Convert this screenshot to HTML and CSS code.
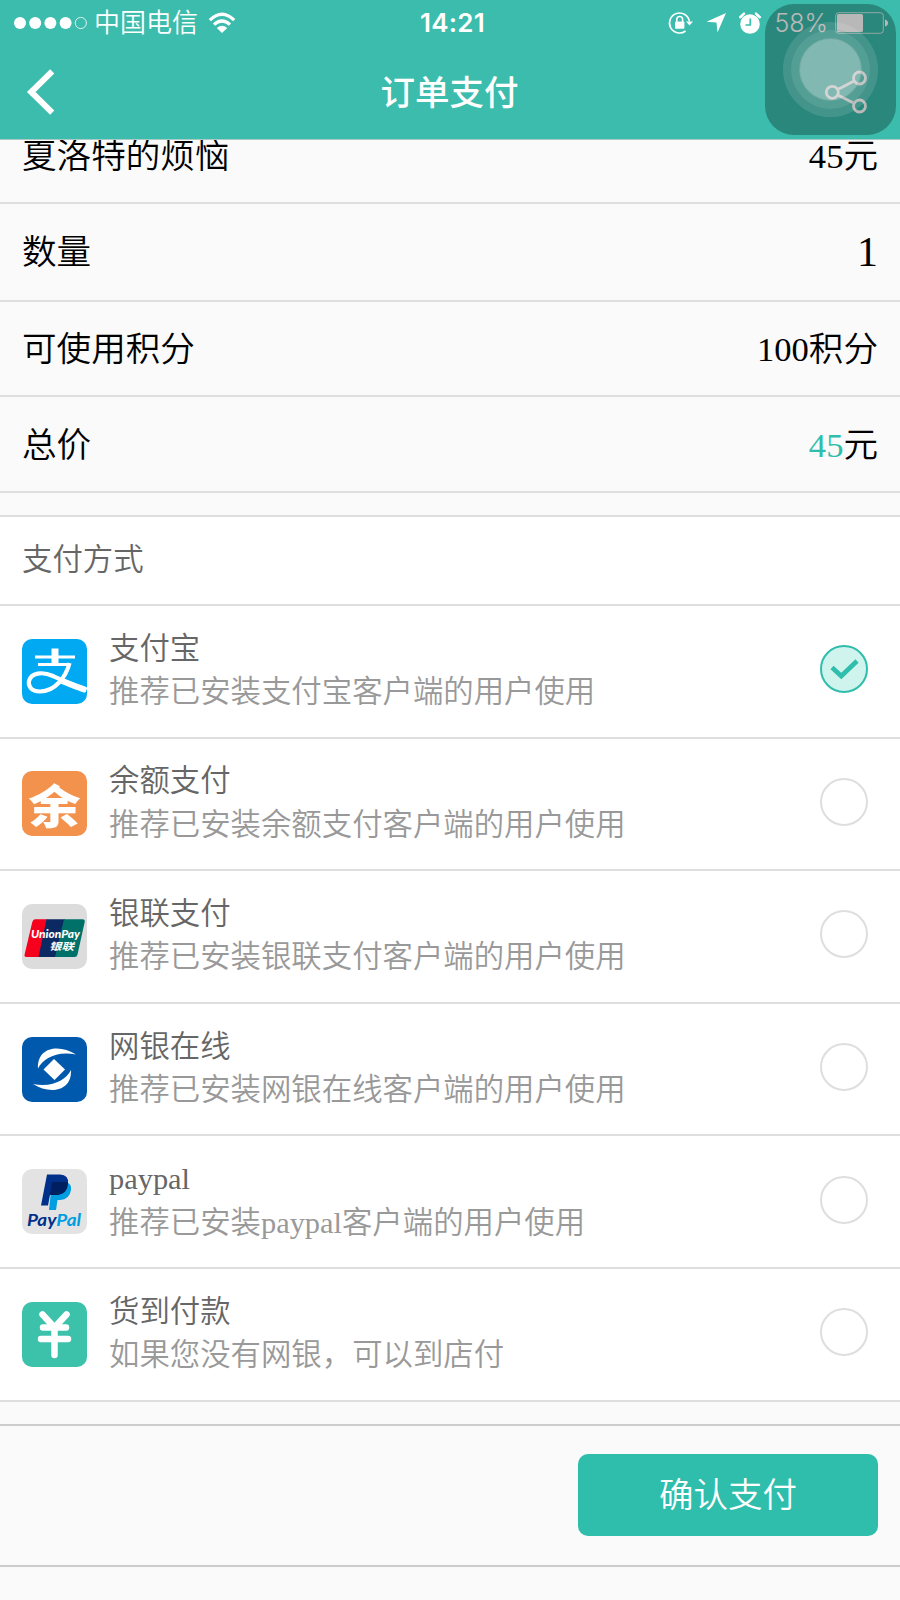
FILE: index.html
```
<!DOCTYPE html>
<html lang="zh-CN">
<head>
  <meta charset="UTF-8" />
  <meta name="viewport" content="width=device-width, initial-scale=1" />
  <title>订单支付</title>
  <link rel="stylesheet" href="styles.css">
</head>
<body>
  <header class="header">
    <div class="status-bar">
      <div class="status-left">
        <svg class="signal" width="75" height="14" viewBox="0 0 75 14">
          <g fill="#fff"><circle cx="7" cy="7" r="6"/><circle cx="22.2" cy="7" r="6"/><circle cx="37.4" cy="7" r="6"/><circle cx="52.6" cy="7" r="6"/></g>
          <circle cx="67.8" cy="7" r="5.6" fill="none" stroke="#fff" stroke-width="0.8"/>
        </svg>
        <span class="carrier">中国电信</span>
        <svg class="wifi" width="28" height="22" viewBox="0 0 28 22">
          <g fill="none" stroke="#fff" stroke-width="3.2">
            <path d="M1.8 8.2Q14-3.8 26.2 8.2"/>
            <path d="M6 12.6Q14 5.4 22 12.6"/>
          </g>
          <path d="M8.8 16Q14 11.4 19.2 16L14 21Z" fill="#fff"/>
        </svg>
      </div>
      <div class="time">14:21</div>
      <div class="status-right">
        <svg width="26" height="24" viewBox="0 0 26 24">
          <path d="M21.4 10.5A10 10 0 1 0 17.5 20" fill="none" stroke="#fff" stroke-width="1.6"/>
          <path d="M18 10.5H25L21.5 14.5Z" fill="#fff"/>
          <rect x="7" y="10.5" width="9.4" height="7.2" rx="1" fill="#fff"/>
          <path d="M8.8 11V8.5a2.9 2.9 0 0 1 5.8 0V11" fill="none" stroke="#fff" stroke-width="1.5"/>
        </svg>
        <svg class="location" width="20" height="20" viewBox="0 0 20 20">
          <path d="M20 0L11.5 19.5L10.5 9.5L0.5 8.8Z" fill="#fff"/>
        </svg>
        <svg class="alarm" width="22" height="22" viewBox="0 0 22 22">
          <circle cx="11" cy="12" r="9.8" fill="#fff"/>
          <path d="M1.2 5.2L5 1.6M20.8 5.2L17 1.6" stroke="#fff" stroke-width="2.6" stroke-linecap="round"/>
          <path d="M11.3 6.5V13H6.5" fill="none" stroke="#3bbcac" stroke-width="1.7"/>
        </svg>
        <span class="percent">58%</span>
        <svg class="battery" width="54" height="22" viewBox="0 0 54 22">
          <rect x="0.7" y="0.7" width="47.6" height="20.6" rx="3" fill="none" stroke="#fff" stroke-width="1" opacity=".7"/>
          <rect x="2" y="2" width="26" height="18" rx="1.5" fill="#fff"/>
          <path d="M50 7.5Q53 8.5 53 11T50 14.5Z" fill="#fff"/>
        </svg>
      </div>
    </div>
    <div class="nav-bar">
      <svg class="back" width="28" height="46" viewBox="0 0 28 46">
        <path d="M25.2 2.3L4.2 23L25.2 43.7" fill="none" stroke="#fff" stroke-width="6"/>
      </svg>
      <h1 class="title">订单支付</h1>
      <svg class="share" width="42" height="44" viewBox="0 0 42 44">
        <g fill="none" stroke="#fff" stroke-width="2.8">
          <circle cx="7.3" cy="22.3" r="6"/><circle cx="34.5" cy="8" r="6"/><circle cx="34.5" cy="36" r="6"/>
          <path d="M12.8 19.5L29 11M12.8 25L29 33.2"/>
        </g>
      </svg>
    </div>
    <!-- floating touch button -->
    <div class="assistive">
      <div class="ring ring-outer"></div>
      <div class="ring ring-middle"></div>
      <div class="ring ring-inner"></div>
    </div>
  </header>

  <section class="summary">
    <div class="summary-row"><span>夏洛特的烦恼</span><span>45元</span></div>
    <div class="summary-row tall"><span>数量</span><span class="count">1</span></div>
    <div class="summary-row"><span>可使用积分</span><span>100积分</span></div>
    <div class="summary-row"><span>总价</span><span><em class="price">45</em>元</span></div>
  </section>

  <section class="payment">
    <h2 class="payment-title">支付方式</h2>

    <div class="method">
      <svg class="logo" viewBox="0 0 65 65">
        <rect width="65" height="65" rx="10" fill="#00a9f2"/>
        <g fill="none" stroke="#fff">
          <path d="M33 9.5V26" stroke-width="7"/>
          <path d="M13 18H53M16 25.6H47" stroke-width="3"/>
          <path d="M47.5 24.1C44 38 33 52.5 18 52.5C9 52.5 6 47 7 42C9 34 20 32 31 37C41 41.5 52 46.5 64.500 51" stroke-width="4.2"/>
          <path d="M40 42C48 45 56 48.500 64 51" stroke-width="6"/>
        </g>
      </svg>
      <div class="info"><h3>支付宝</h3><p>推荐已安装支付宝客户端的用户使用</p></div>
      <svg class="check" viewBox="0 0 48 48">
        <circle cx="24" cy="24" r="23" fill="#cff4ee" stroke="#2fbdac" stroke-width="2"/>
        <path d="M12 22.5L21.3 31L37 16" fill="none" stroke="#2fbdac" stroke-width="4.6"/>
      </svg>
    </div>

    <div class="method">
      <svg class="logo" viewBox="0 0 65 65">
        <rect width="65" height="65" rx="10" fill="#f2924d"/>
        <text class="yu" x="6.5" y="51.500" textLength="52" lengthAdjust="spacingAndGlyphs">余</text>
      </svg>
      <div class="info"><h3>余额支付</h3><p>推荐已安装余额支付客户端的用户使用</p></div>
      <span class="radio"></span>
    </div>

    <div class="method">
      <svg class="logo" viewBox="0 0 65 65">
        <rect width="65" height="65" rx="10" fill="#dcdcdc"/>
        <path d="M13 15.3H25L18 53H4.5Q2 53 2.6 50.5L10.3 18Q11 15.3 13 15.3Z" fill="#f5001d"/>
        <path d="M24.5 15.3H43L34 53H16.5Z" fill="#0b2a63"/>
        <path d="M42 15.3H60.5Q63.3 15.3 62.7 18L55.5 50.5Q55 53 52.5 53H33Z" fill="#007169"/>
        <text class="union" x="9" y="33.500" textLength="49" lengthAdjust="spacingAndGlyphs">UnionPay</text>
        <text class="union-cn" x="27" y="46" textLength="25" lengthAdjust="spacingAndGlyphs">银联</text>
      </svg>
      <div class="info"><h3>银联支付</h3><p>推荐已安装银联支付客户端的用户使用</p></div>
      <span class="radio"></span>
    </div>

    <div class="method">
      <svg class="logo" viewBox="0 0 65 65">
        <rect width="65" height="65" rx="10" fill="#0059ac"/>
        <g fill="#fff">
          <path d="M54 17.5C38 7 15 9 16 31.500C21 22 34 13.500 54 17.500Z"/>
          <path d="M11 47C27 57.5 50 55 49 33C44 42.500 31 51 11 47Z"/>
          <path d="M32 22L43 32.500L32.500 43L21.500 32.500Z"/>
        </g>
      </svg>
      <div class="info"><h3>网银在线</h3><p>推荐已安装网银在线客户端的用户使用</p></div>
      <span class="radio"></span>
    </div>

    <div class="method">
      <svg class="logo" viewBox="0 0 65 65">
        <rect width="65" height="65" rx="10" fill="#e3e3e3"/>
        <path d="M30 13H44Q50 15 49 21Q47.5 30.5 38 31H35.5L34 41H27Z" fill="#009ee0"/>
        <path d="M25 5.5H38Q47 6 46 14.5Q44.5 25.5 34 26H28L26 36.5H19Z" fill="#00308a"/>
        <path d="M30 13H45.8Q46.2 25.500 34 26H28Z" fill="#001f60"/>
        <text class="paypal" x="5" y="56.500" textLength="54" lengthAdjust="spacingAndGlyphs">Pay<tspan fill="#009ee0">Pal</tspan></text>
      </svg>
      <div class="info"><h3>paypal</h3><p>推荐已安装paypal客户端的用户使用</p></div>
      <span class="radio"></span>
    </div>

    <div class="method">
      <svg class="logo" viewBox="0 0 65 65">
        <rect width="65" height="65" rx="10" fill="#3cc1ab"/>
        <path d="M20.5 12.5L32.5 25.5L44.5 12.5M21 25.5H44M19 37H46M32.5 25.5V53" fill="none" stroke="#fff" stroke-width="6.5" stroke-linecap="round"/>
      </svg>
      <div class="info"><h3>货到付款</h3><p>如果您没有网银，可以到店付</p></div>
      <span class="radio"></span>
    </div>
  </section>

  <footer class="footer">
    <button class="pay-btn">确认支付</button>
  </footer>
</body>
</html>
```

FILE: styles.css
```
* {
  box-sizing: border-box;
}
body {
  margin: 0;
  height: 1600px;
  overflow: hidden;
  background-color: #fafafa;
  color: #000;
  font-family: 'Liberation Serif', 'Noto Sans CJK SC', serif;
  font-weight: 350;
}
svg {
  display: block;
  flex-shrink: 0;
  overflow: visible;
}
h1, h2, h3, p {
  margin: 0;
  font-weight: 350;
}

/* header */
.header {
  position: relative;
  z-index: 1;
  height: 140px;
  background-color: #3bbcac;
  border-bottom: 1px solid #a9cbc5;
  color: #fff;
}
.status-bar {
  display: grid;
  grid-template-columns: 1fr auto 1fr;
  align-items: center;
  height: 44px;
  padding: 0 11px 0 13px;
  font-family: Inter, 'Noto Sans CJK SC', sans-serif;
  font-size: 26px;
}
.status-left, .status-right {
  display: flex;
  align-items: center;
}
.carrier {
  margin-left: 6px;
  font-size: 26px;
  line-height: 44px;
}
.wifi {
  margin-left: 10px;
}
.time {
  padding-left: 3px;
  font-weight: 600;
  letter-spacing: 0.2px;
  line-height: 46px;
}
.status-right {
  justify-content: flex-end;
}
.location {
  margin-left: 12px;
}
.alarm {
  margin-left: 13px;
}
.percent {
  margin-left: 13px;
  font-size: 25px;
  line-height: 46px;
}
.battery {
  margin-left: 7px;
}
.nav-bar {
  display: flex;
  align-items: center;
  justify-content: space-between;
  height: 95px;
  padding: 0 33px 0 27px;
}
.title {
  font-family: 'Noto Sans CJK SC', sans-serif;
  font-size: 34.5px;
  font-weight: 500;
  line-height: 50px;
  padding: 0 0 4px 19px;
}
.assistive {
  position: absolute;
  top: 4px;
  left: 765px;
  width: 131px;
  height: 131px;
  border-radius: 29px;
  background-color: rgba(0, 0, 0, 0.28);
}
.ring {
  position: absolute;
  border-radius: 50%;
}
.ring-outer {
  inset: 18px;
  background-color: rgba(255, 255, 255, 0.12);
}
.ring-middle {
  inset: 25px;
  background-color: rgba(255, 255, 255, 0.09);
  border: 1px solid rgba(0, 80, 70, 0.15);
}
.ring-inner {
  inset: 34px;
  background-color: rgba(255, 255, 255, 0.27);
  border: 1px solid rgba(0, 80, 70, 0.15);
}

/* order summary, first row is scrolled under the header */
.summary {
  margin-top: -32px;
}
.summary-row {
  display: flex;
  align-items: center;
  justify-content: space-between;
  height: 95.5px;
  padding: 2px 22px 0;
  border-bottom: 2px solid #dedede;
  font-size: 34.6px;
  line-height: 50px;
}
.summary-row.tall {
  height: 98px;
  padding-top: 0;
}
.count {
  font-size: 42px;
}
.price {
  color: #2fbdac;
  font-style: normal;
}

/* payment methods */
.payment {
  margin-top: 22px;
  background-color: #fff;
  border-top: 2px solid #dedede;
}
.payment-title {
  height: 89.5px;
  padding-left: 22px;
  border-bottom: 2px solid #dedede;
  color: #666;
  font-size: 30.4px;
  line-height: 87px;
}
.method {
  display: flex;
  align-items: center;
  height: 132.6px;
  padding: 0 32.5px 0 22px;
  border-bottom: 2px solid #dedede;
}
.logo {
  width: 65px;
  height: 65px;
}
.info {
  flex: 1;
  margin-left: 22px;
  font-size: 30.4px;
  line-height: 43.4px;
}
.info h3 {
  color: #666;
  font-size: inherit;
}
.info p {
  color: #999;
}
.radio, .check {
  width: 48px;
  height: 48px;
  margin-bottom: 4px;
}
.radio {
  border: 2px solid #dedede;
  border-radius: 50%;
}

/* text inside the logos */
.yu {
  fill: #fff;
  font: 900 46px 'Noto Sans CJK SC', sans-serif;
}
.union {
  fill: #fff;
  font: italic 900 11px Lato, sans-serif;
}
.union-cn {
  fill: #fff;
  font: italic 700 10px 'Noto Sans CJK SC', sans-serif;
}
.paypal {
  fill: #00308a;
  font: italic 700 17px Lato, sans-serif;
}

/* footer */
.footer {
  display: flex;
  align-items: center;
  justify-content: flex-end;
  height: 143px;
  margin-top: 22px;
  padding-right: 22px;
  border-top: 2px solid #ccc;
  border-bottom: 2px solid #ccc;
}
.pay-btn {
  width: 300px;
  height: 82px;
  padding: 0 0 6px;
  border: none;
  border-radius: 10px;
  background-color: #2fbdac;
  color: #fff;
  font-family: 'Noto Sans CJK SC', sans-serif;
  font-size: 34.5px;
  font-weight: 350;
}
```
